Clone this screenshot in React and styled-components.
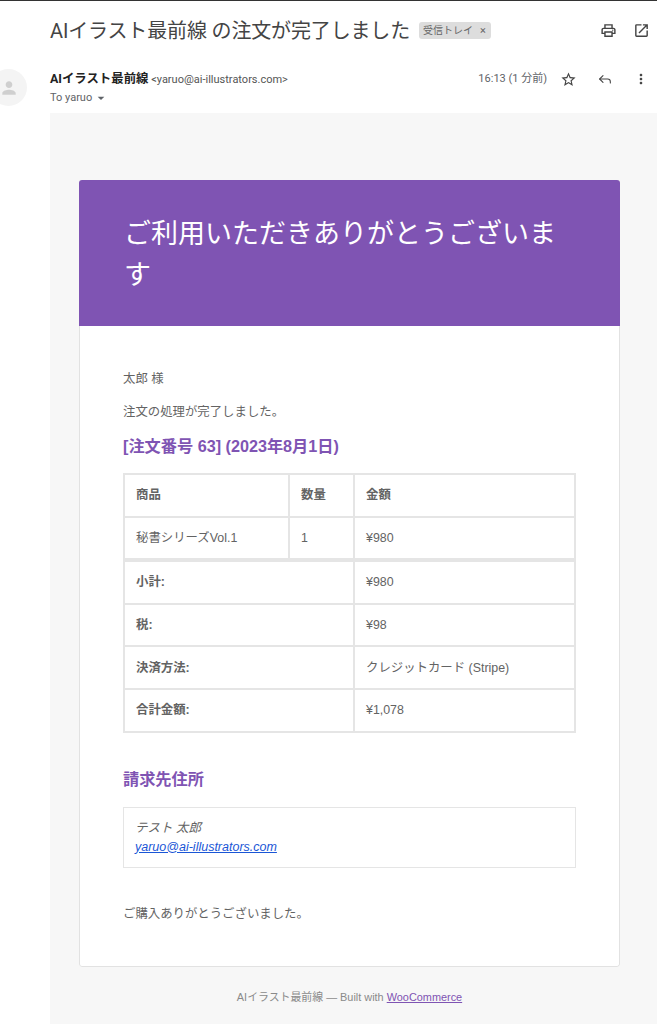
import React from 'react'
import styled, { createGlobalStyle } from 'styled-components'
import { MdOutlinePrint, MdOpenInNew, MdStarBorder, MdMoreVert, MdArrowDropDown, MdPerson } from 'react-icons/md'
import { Reply } from 'lucide-react'

const Global = createGlobalStyle`
  html, body { margin: 0; padding: 0; background: #fff; }
  body { font-family: "Liberation Sans", "Noto Sans CJK JP", sans-serif; }
`

const Page = styled.div`
  width: 657px;
  height: 1024px;
  overflow: hidden;
  border-top: 1px solid #333;
  box-sizing: border-box;
`

const SubjectRow = styled.div`
  display: flex;
  align-items: center;
  height: 59px;
  padding-left: 50px;
  padding-right: 7px;
  margin-bottom: 2px;
`

const Subject = styled.h1`
  margin: 0;
  font: 400 20px/28px Roboto, "Noto Sans CJK JP", sans-serif;
  letter-spacing: -0.15px;
  color: #444;
`

const Badge = styled.span`
  display: flex;
  margin-left: 9px;
  height: 17px;
  padding: 0 5px 0 4px;
  border-radius: 3px;
  background: #ddd;
  color: #666;
  font: 400 10px/17px Roboto, "Noto Sans CJK JP", sans-serif;
  white-space: nowrap;
`

const BadgeClose = styled.span`
  margin-left: 7px;
  font-size: 11px;
`

const TopActions = styled.div`
  margin-left: auto;
  display: flex;
  gap: 16px;
  color: #444;
  font-size: 17px;
  svg { display: block; }
`

const MailHead = styled.div`
  display: flex;
  height: 51px;
`

const AvatarSlot = styled.div`
  width: 50px;
  flex: none;
  overflow: hidden;
  padding-top: 7px;
`

const Avatar = styled.div`
  width: 37px;
  height: 37px;
  margin-left: -10px;
  border-radius: 50%;
  background: #f4f4f4;
  color: #cfcfcf;
  display: flex;
  align-items: center;
  justify-content: center;
  font-size: 20px;
`

const SenderBlock = styled.div`
  flex: 1;
  padding-top: 8px;
`

const SenderName = styled.div`
  font: 400 11px/18px Roboto, "Noto Sans CJK JP", sans-serif;
  color: #555;
  b { font-size: 12.4px; font-weight: 700; color: #222; }
`

const ToLine = styled.div`
  display: flex;
  align-items: center;
  font: 400 11px/17px Roboto, sans-serif;
  color: #5f6368;
  svg { font-size: 16px; margin-left: 1px; }
`

const MetaRow = styled.div`
  display: flex;
  align-items: center;
  height: 18px;
  margin-top: 8px;
  padding-right: 8px;
  color: #555;
  svg { display: block; color: #444; }
`

const Time = styled.span`
  font: 400 11px/18px Roboto, "Noto Sans CJK JP", sans-serif;
  color: #5f6368;
  margin-right: 13px;
`

const MetaIcon = styled.span`
  font-size: ${p => p.$size}px;
  margin-left: ${p => p.$gap}px;
`

const Panel = styled.div`
  margin-left: 50px;
  padding: 67px 37px 40px 29px;
  background: #f7f7f7;
`

const Card = styled.div`
  background: #fff;
  border-radius: 3px;
  overflow: hidden;
`

const Banner = styled.div`
  background: #7f54b3;
  padding: 34px 44px 30px 45px;
`

const BannerTitle = styled.h1`
  margin: 0;
  color: #fff;
  font: 400 27px/41px "Liberation Sans", "Noto Sans CJK JP", sans-serif;
`

const Body = styled.div`
  padding: 44px 43px 28px;
  border: 1px solid #e2e2e2;
  border-top: 0;
  border-radius: 0 0 3px 3px;
  color: #636363;
  font-size: 12.4px;
  line-height: 18px;
`

const Para = styled.p`
  margin: 0 0 15px;
`

const Heading = styled.h2`
  margin: 0 0 ${p => p.$after}px;
  color: #7f54b3;
  font-size: 16.2px;
  line-height: 20px;
  font-weight: 700;
`

const OrderTable = styled.table`
  width: 453px;
  border-collapse: collapse;
  table-layout: fixed;
  margin-bottom: 36px;
`

const Cell = styled.td`
  border: 2px solid #e5e5e5;
  border-top-width: ${p => (p.$thick ? 4 : 2)}px;
  height: 40.6px;
  padding: 0 11px;
  font-size: 12.4px;
  font-weight: ${p => (p.$bold ? 700 : 400)};
  text-align: left;
  color: #636363;
`

const AddressBox = styled.address`
  border: 1px solid #e5e5e5;
  padding: 11px 11px 10px;
  height: 38px;
  font-style: italic;
  font-size: 12.5px;
  line-height: 19px;
  color: #636363;
  margin-bottom: 37px;
`

const MailLink = styled.a`
  color: #1a56d6;
  text-decoration: underline;
`

const Footer = styled.div`
  padding-top: 23px;
  text-align: center;
  font-size: 10.9px;
  line-height: 14px;
  color: #8a8a8a;
  a { color: #7f54b3; text-decoration: underline; }
`

export default function App() {
  return (
    <Page>
      <Global />
      <SubjectRow>
        <Subject>AIイラスト最前線 の注文が完了しました</Subject>
        <Badge>受信トレイ<BadgeClose>×</BadgeClose></Badge>
        <TopActions>
          <MdOutlinePrint />
          <MdOpenInNew />
        </TopActions>
      </SubjectRow>
      <MailHead>
        <AvatarSlot>
          <Avatar><MdPerson /></Avatar>
        </AvatarSlot>
        <SenderBlock>
          <SenderName><b>AIイラスト最前線</b> &lt;yaruo@ai-illustrators.com&gt;</SenderName>
          <ToLine>To yaruo <MdArrowDropDown /></ToLine>
        </SenderBlock>
        <MetaRow>
          <Time>16:13 (1 分前)</Time>
          <MetaIcon $size={17} $gap={0}><MdStarBorder /></MetaIcon>
          <MetaIcon $size={16} $gap={20}><Reply size={16} strokeWidth={1.6} /></MetaIcon>
          <MetaIcon $size={16} $gap={20}><MdMoreVert /></MetaIcon>
        </MetaRow>
      </MailHead>
      <Panel>
        <Card>
          <Banner>
            <BannerTitle>ご利用いただきありがとうございます</BannerTitle>
          </Banner>
          <Body>
            <Para>太郎 様</Para>
            <Para>注文の処理が完了しました。</Para>
            <Heading $after={17}>[注文番号 63] (2023年8月1日)</Heading>
            <OrderTable>
              <colgroup>
                <col style={{ width: 165 }} />
                <col style={{ width: 65 }} />
                <col />
              </colgroup>
              <tbody>
                <tr>
                  <Cell as="th" $bold>商品</Cell>
                  <Cell as="th" $bold>数量</Cell>
                  <Cell as="th" $bold>金額</Cell>
                </tr>
                <tr>
                  <Cell>秘書シリーズVol.1</Cell>
                  <Cell>1</Cell>
                  <Cell>¥980</Cell>
                </tr>
                <tr>
                  <Cell as="th" colSpan={2} $bold $thick>小計:</Cell>
                  <Cell $thick>¥980</Cell>
                </tr>
                <tr>
                  <Cell as="th" colSpan={2} $bold>税:</Cell>
                  <Cell>¥98</Cell>
                </tr>
                <tr>
                  <Cell as="th" colSpan={2} $bold>決済方法:</Cell>
                  <Cell>クレジットカード (Stripe)</Cell>
                </tr>
                <tr>
                  <Cell as="th" colSpan={2} $bold>合計金額:</Cell>
                  <Cell>¥1,078</Cell>
                </tr>
              </tbody>
            </OrderTable>
            <Heading $after={18}>請求先住所</Heading>
            <AddressBox>
              テスト 太郎
              <br />
              <MailLink href="#">yaruo@ai-illustrators.com</MailLink>
            </AddressBox>
            <Para>ご購入ありがとうございました。</Para>
          </Body>
        </Card>
        <Footer>
          AIイラスト最前線 — Built with <a href="#">WooCommerce</a>
        </Footer>
      </Panel>
    </Page>
  )
}
